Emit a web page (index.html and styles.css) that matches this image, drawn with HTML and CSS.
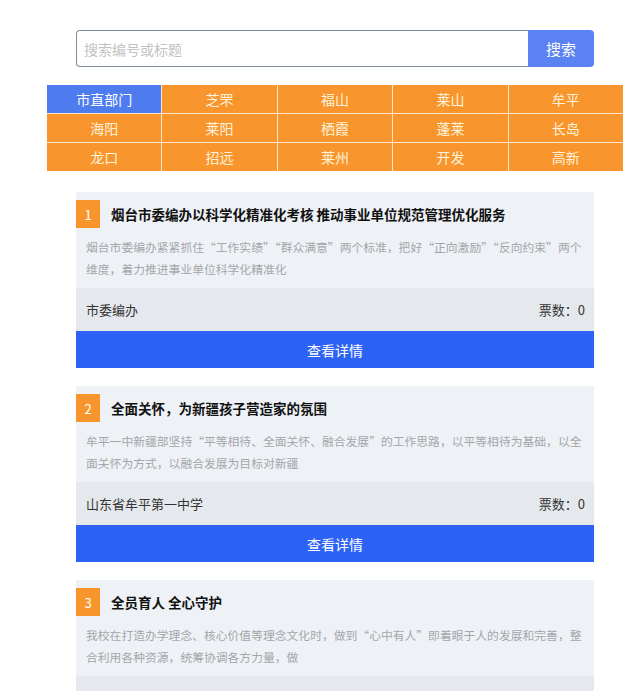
FILE: index.html
```html
<!DOCTYPE html>
<html lang="zh-CN">
<head>
<meta charset="utf-8">
<link rel="stylesheet" href="styles.css">
</head>
<body>
<div class="page">
  <div class="search">
    <input class="search-input" type="text" placeholder="搜索编号或标题">
    <button class="search-btn">搜索</button>
  </div>
  <div class="regions">
    <div class="cell active">市直部门</div>
    <div class="cell">芝罘</div>
    <div class="cell">福山</div>
    <div class="cell">莱山</div>
    <div class="cell">牟平</div>
    <div class="cell">海阳</div>
    <div class="cell">莱阳</div>
    <div class="cell">栖霞</div>
    <div class="cell">蓬莱</div>
    <div class="cell">长岛</div>
    <div class="cell">龙口</div>
    <div class="cell">招远</div>
    <div class="cell">莱州</div>
    <div class="cell">开发</div>
    <div class="cell">高新</div>
  </div>
  <div class="list">
    <div class="card">
      <div class="card-head"><span class="badge">1</span><span class="title">烟台市委编办以科学化精准化考核 推动事业单位规范管理优化服务</span></div>
      <p class="desc">烟台市委编办紧紧抓住“工作实绩”“群众满意”两个标准，把好“正向激励”“反向约束”两个维度，着力推进事业单位科学化精准化</p>
      <div class="card-foot"><span>市委编办</span><span>票数：0</span></div>
      <div class="detail">查看详情</div>
    </div>
    <div class="card">
      <div class="card-head"><span class="badge">2</span><span class="title">全面关怀，为新疆孩子营造家的氛围</span></div>
      <p class="desc">牟平一中新疆部坚持“平等相待、全面关怀、融合发展”的工作思路，以平等相待为基础，以全面关怀为方式，以融合发展为目标对新疆</p>
      <div class="card-foot"><span>山东省牟平第一中学</span><span>票数：0</span></div>
      <div class="detail">查看详情</div>
    </div>
    <div class="card">
      <div class="card-head"><span class="badge">3</span><span class="title">全员育人 全心守护</span></div>
      <p class="desc">我校在打造办学理念、核心价值等理念文化时，做到“心中有人”即着眼于人的发展和完善，整合利用各种资源，统筹协调各方力量，做</p>
      <div class="card-foot"><span>牟平区实验小学</span><span>票数：0</span></div>
      <div class="detail">查看详情</div>
    </div>
  </div>
</div>
</body>
</html>
```

FILE: styles.css
```css
* { box-sizing: border-box; }
body {
  margin: 0;
  background: #ffffff;
  font-family: "Noto Sans CJK SC", "Noto Sans", "Liberation Sans", sans-serif;
}
.page {
  padding-top: 30px;
}
.search {
  display: flex;
  margin-left: 76px;
  width: 518px;
  height: 37px;
}
.search-input {
  flex: 1;
  height: 37px;
  border: 1px solid #7f8ea3;
  border-right: none;
  border-radius: 4px 0 0 4px;
  padding: 0 7px;
  font-family: inherit;
  font-size: 14px;
  color: #333;
  background: #fff;
  outline: none;
}
.search-input::placeholder { color: #c2c2c2; }
.search-btn {
  width: 66px;
  height: 37px;
  border: none;
  border-radius: 0 4px 4px 0;
  background: #5a82f2;
  color: #fff;
  font-family: inherit;
  font-size: 15px;
  padding: 0;
}
.regions {
  margin-top: 18px;
  margin-left: 47px;
  width: 576px;
  display: grid;
  grid-template-columns: repeat(5, 1fr);
  grid-auto-rows: 28px;
  gap: 1px;
  background: #fbe6c9;
}
.cell {
  background: #f8962d;
  color: #fff2dc;
  font-size: 14px;
  display: flex;
  align-items: center;
  justify-content: center;
}
.cell.active {
  background: #4e7cee;
  color: #fff;
}
.list {
  margin-top: 21px;
  margin-left: 76px;
  width: 518px;
  display: flex;
  flex-direction: column;
  gap: 18px;
}
.card {
  background: #eef2f6;
  padding-top: 8px;
}
.card-head {
  display: flex;
  align-items: center;
  height: 28px;
}
.badge {
  width: 24px;
  height: 28px;
  background: #f8962d;
  color: #fff;
  font-size: 13px;
  display: flex;
  align-items: center;
  justify-content: center;
}
.title {
  margin-left: 11px;
  font-size: 13.5px;
  font-weight: 700;
  color: #111;
}
.desc {
  margin: 0;
  padding: 8px 10px;
  font-size: 11.8px;
  line-height: 22px;
  color: #a3a6aa;
  font-feature-settings: "fwid" 1;
}
.card-foot {
  display: flex;
  justify-content: space-between;
  align-items: center;
  height: 43px;
  padding: 0 9px 0 10px;
  background: #e5e8ec;
  font-size: 13px;
  color: #333;
}
.detail {
  height: 37px;
  background: #2c63f4;
  color: #fff;
  font-size: 14px;
  display: flex;
  align-items: center;
  justify-content: center;
}
```
